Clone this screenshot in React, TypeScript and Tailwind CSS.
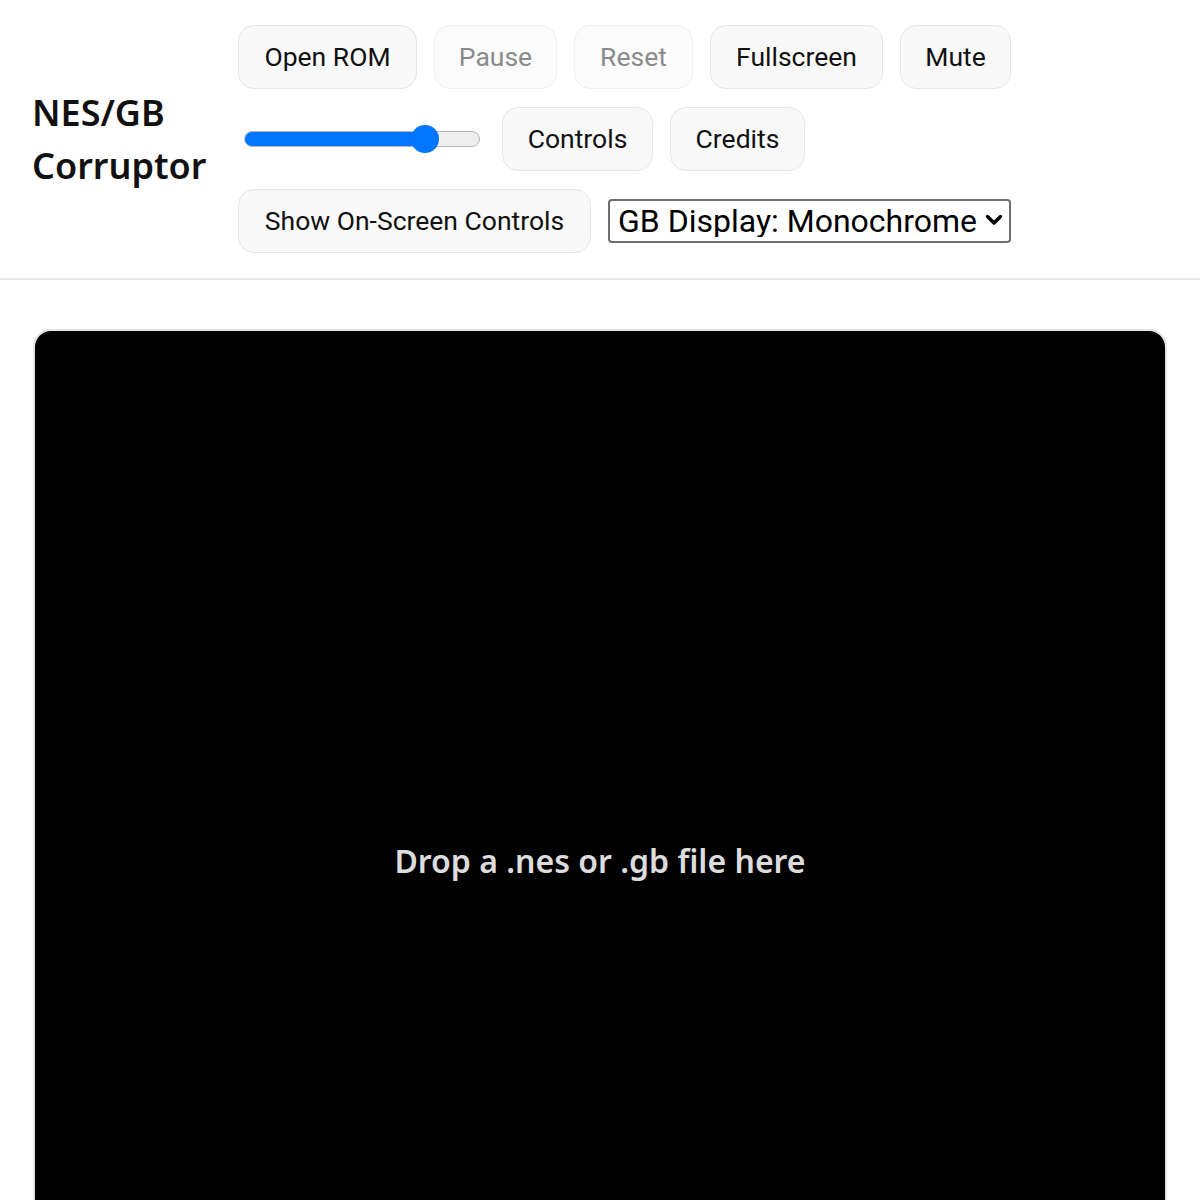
import React from "react";

const btn =
  "h-[64px] flex items-center justify-center rounded-[16px] border border-[#e6e6e6] bg-[#f9f9f9] text-[26.5px] leading-none whitespace-nowrap";

function Button({
  children,
  disabled,
  w,
}: {
  children: React.ReactNode;
  disabled?: boolean;
  w: string;
}) {
  return (
    <button
      disabled={disabled}
      className={
        btn +
        " " +
        w +
        (disabled ? " text-[#8a8a8a] border-[#efefef] bg-[#fbfbfb]" : " text-[#111]")
      }
      style={{ fontFamily: "Roboto, sans-serif" }}
    >
      {children}
    </button>
  );
}

function Volume() {
  return (
    <div className="relative w-[236px] h-[30px] ml-[6px] mr-[5px] flex items-center">
      <div className="w-full h-[16px] rounded-full border-[1.5px] border-[#b5b5b5] bg-[#efefef] overflow-hidden">
        <div className="h-full w-[77%] bg-[#0075ff]" />
      </div>
      <div className="absolute left-[167px] top-[1px] w-[28px] h-[28px] rounded-full bg-[#0075ff]" />
    </div>
  );
}

export default function App() {
  return (
    <div className="w-[1200px] h-[1200px] overflow-hidden bg-white">
      <header className="flex items-center gap-[33px] pl-[32px] pt-[25px] pb-[25px] border-b-2 border-[#e8e8e8]">
        <h1
          className="text-[36px] leading-[53px] font-semibold text-[#111] w-[173px]"
          style={{ fontFamily: "'Noto Sans', sans-serif" }}
        >
          NES/GB Corruptor
        </h1>
        <div className="flex flex-col gap-[18px]">
          <div className="flex items-center gap-[17px]">
            <Button w="w-[179px]">Open ROM</Button>
            <Button w="w-[123px]" disabled>Pause</Button>
            <Button w="w-[119px]" disabled>Reset</Button>
            <Button w="w-[173px]">Fullscreen</Button>
            <Button w="w-[111px]">Mute</Button>
          </div>
          <div className="flex items-center gap-[17px]">
            <Volume />
            <Button w="w-[151px]">Controls</Button>
            <Button w="w-[135px]">Credits</Button>
          </div>
          <div className="flex items-center gap-[17px]">
            <Button w="w-[353px]">Show On-Screen Controls</Button>
            <div className="relative">
              <select
                className="appearance-none w-[403px] h-[44px] pl-[8px] pr-[28px] border-2 border-[#6e6e6e] rounded-[4px] bg-white text-[32px] leading-none text-black"
                style={{ fontFamily: "Roboto, sans-serif" }}
                defaultValue="mono"
              >
                <option value="mono">GB Display: Monochrome</option>
                <option value="color">GB Display: Color</option>
              </select>
              <svg
                className="absolute right-[8px] top-[14px] pointer-events-none"
                width="18"
                height="14"
                viewBox="0 0 18 14"
              >
                <path d="M2.5 3.5 L9 10 L15.5 3.5" fill="none" stroke="#000" strokeWidth="3.4" strokeLinecap="round" strokeLinejoin="round" />
              </svg>
            </div>
          </div>
        </div>
      </header>
      <main className="px-[33px] pt-[49px]">
        <div className="h-[1064px] rounded-[18px] border-2 border-[#e4e4e4] bg-black flex items-center justify-center">
          <p
            className="text-[32px] font-semibold text-[#dcdcdc]"
            style={{ fontFamily: "'Noto Sans', sans-serif" }}
          >
            Drop a .nes or .gb file here
          </p>
        </div>
      </main>
    </div>
  );
}
